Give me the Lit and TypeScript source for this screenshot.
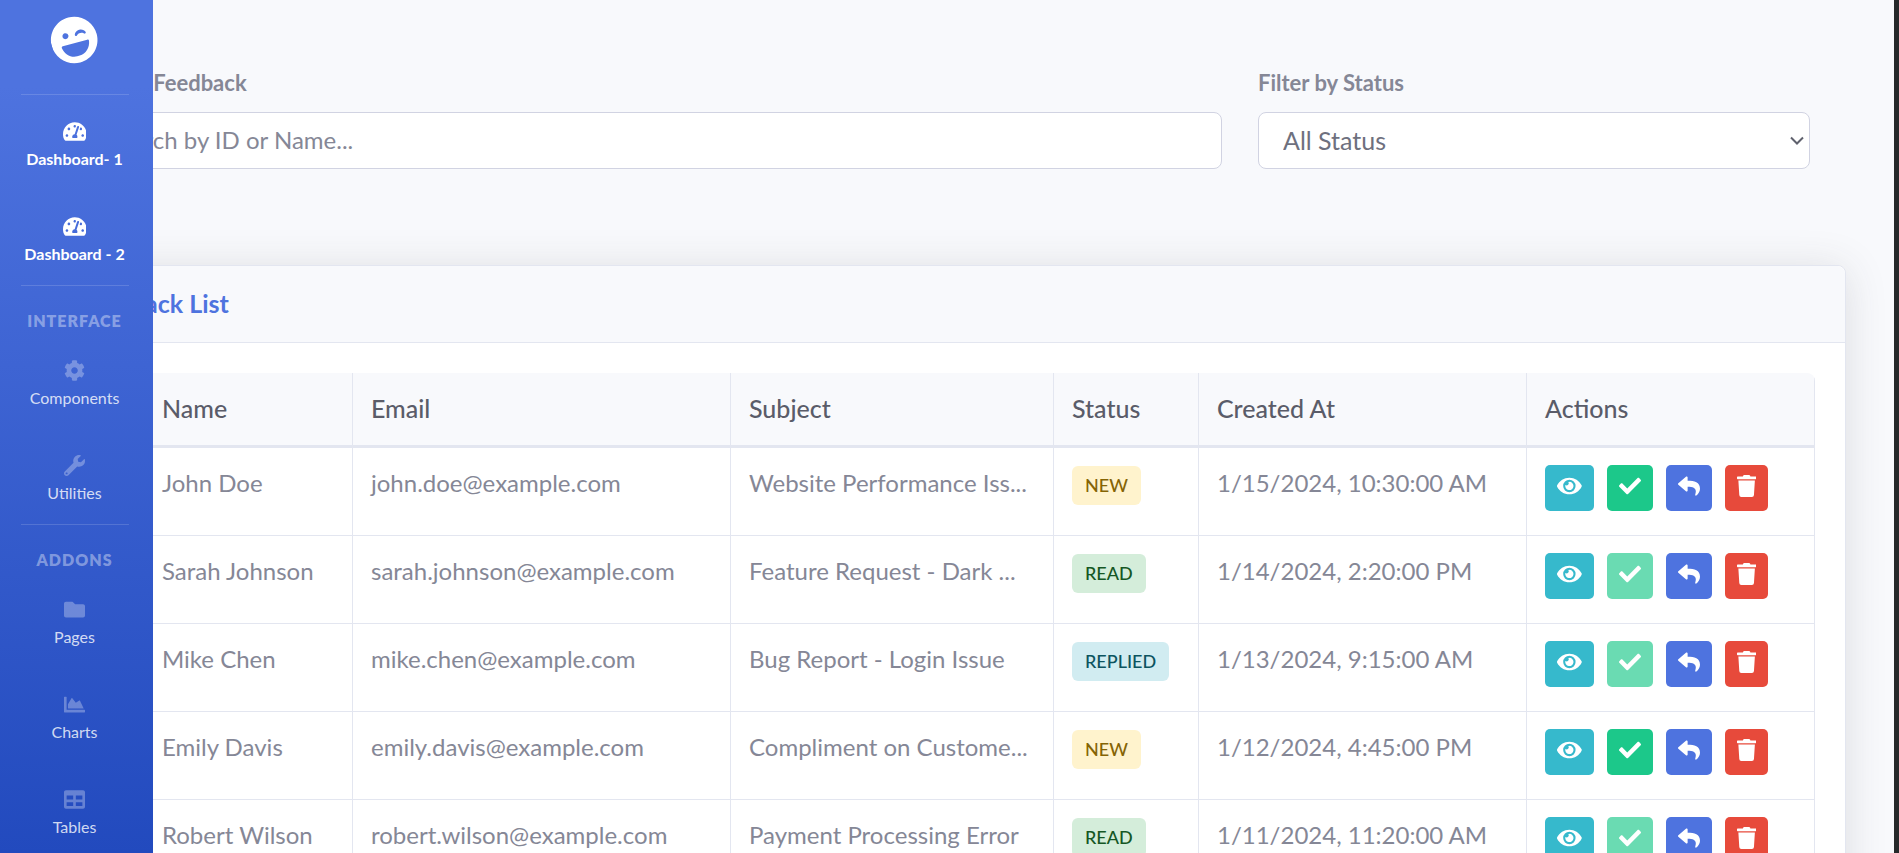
import { LitElement, html, css, svg } from "lit";
import { customElement, property, state } from "lit/decorators.js";
import { classMap } from "lit/directives/class-map.js";

interface Glyph {
  width: number;
  path: string;
}

const GLYPHS: Record<string, Glyph> = {
  wink: {
    width: 496,
    path: "M248 8C111 8 0 119 0 256s111 248 248 248 248-111 248-248S385 8 248 8zm20.1 198.1c4-25.2 34.2-42.1 59.9-42.1s55.9 16.9 59.9 42.1c1.7 11.1-11.4 18.3-19.8 10.8l-9.5-8.5c-14.8-13.2-46.2-13.2-61 0L288 217c-8.4 7.4-21.6.3-19.9-10.9zM168 160c17.7 0 32 14.3 32 32s-14.3 32-32 32-32-14.3-32-32 14.3-32 32-32zM113.6 288h268.8c9.6 0 17 8.2 15.5 17.7C387 378 330 432 262 432h-28c-68 0-125-54-135.9-126.3C96.6 296.2 104 288 113.6 288z",
  },
  gauge: {
    width: 576,
    path: "M288 32C128.94 32 0 160.94 0 320c0 52.8 14.25 102.26 39.06 144.8 5.61 9.62 16.3 15.2 27.44 15.2h443c11.14 0 21.83-5.58 27.44-15.2C561.75 422.26 576 372.8 576 320c0-159.06-128.94-288-288-288zm0 64c14.71 0 26.58 10.13 30.32 23.65-1.11 2.26-2.64 4.23-3.45 6.67l-9.22 27.67c-5.13 3.49-10.97 6.01-17.64 6.01-17.67 0-32-14.33-32-32S270.33 96 288 96zM96 384c-17.67 0-32-14.33-32-32s14.33-32 32-32 32 14.33 32 32-14.33 32-32 32zm48-160c-17.67 0-32-14.33-32-32s14.33-32 32-32 32 14.33 32 32-14.33 32-32 32zm246.77-72.41l-61.33 184C343.13 347.33 352 364.54 352 384c0 11.72-3.38 22.55-8.88 32H232.88c-5.5-9.45-8.88-20.28-8.88-32 0-33.94 26.5-61.43 59.9-63.59l61.34-184.01c4.17-12.56 17.73-19.45 30.36-15.17 12.57 4.19 19.35 17.79 15.17 30.36zm14.66 57.2l15.52-46.55c3.47-1.29 7.13-2.23 11.05-2.23 17.67 0 32 14.33 32 32s-14.33 32-32 32c-11.38-.01-20.89-6.28-26.57-15.22zM480 384c-17.67 0-32-14.33-32-32s14.33-32 32-32 32 14.33 32 32-14.33 32-32 32z",
  },
  cog: {
    width: 512,
    path: "M487.4 315.7l-42.6-24.6c4.3-23.2 4.3-47 0-70.2l42.6-24.6c4.9-2.8 7.1-8.6 5.5-14-11.1-35.6-30-67.8-54.7-94.6-3.8-4.1-10-5.1-14.8-2.3L380.8 110c-17.9-15.4-38.5-27.3-60.8-35.1V25.8c0-5.6-3.9-10.5-9.4-11.7-36.7-8.2-74.3-7.8-109.2 0-5.5 1.2-9.4 6.1-9.4 11.7V75c-22.2 7.9-42.8 19.8-60.8 35.1L88.7 85.5c-4.9-2.8-11-1.9-14.8 2.3-24.7 26.7-43.6 58.9-54.7 94.6-1.7 5.4.6 11.2 5.5 14L67.3 221c-4.3 23.2-4.3 47 0 70.2l-42.6 24.6c-4.9 2.8-7.1 8.6-5.5 14 11.1 35.6 30 67.8 54.7 94.6 3.8 4.1 10 5.1 14.8 2.3l42.6-24.6c17.9 15.4 38.5 27.3 60.8 35.1v49.2c0 5.6 3.9 10.5 9.4 11.7 36.7 8.2 74.3 7.8 109.2 0 5.5-1.2 9.4-6.1 9.4-11.7v-49.2c22.2-7.9 42.8-19.8 60.8-35.1l42.6 24.6c4.9 2.8 11 1.9 14.8-2.3 24.7-26.7 43.6-58.9 54.7-94.6 1.5-5.5-.7-11.3-5.6-14.1zM256 336c-44.1 0-80-35.9-80-80s35.9-80 80-80 80 35.9 80 80-35.9 80-80 80z",
  },
  wrench: {
    width: 512,
    path: "M507.73 109.1c-2.24-9.03-13.54-12.09-20.12-5.51l-74.36 74.36-67.88-11.31-11.31-67.88 74.36-74.36c6.62-6.62 3.43-17.9-5.66-20.16-47.38-11.74-99.55.91-136.58 37.93-39.64 39.64-50.55 97.1-34.05 147.2L18.74 402.76c-24.99 24.99-24.99 65.51 0 90.5 24.99 24.99 65.51 24.99 90.5 0l213.21-213.21c50.12 16.71 107.47 5.68 147.37-34.22 37.07-37.07 49.7-89.32 37.91-136.73zM64 472c-13.25 0-24-10.75-24-24 0-13.26 10.75-24 24-24s24 10.74 24 24c0 13.25-10.75 24-24 24z",
  },
  folder: {
    width: 512,
    path: "M464 128H272l-64-64H48C21.49 64 0 85.49 0 112v288c0 26.51 21.49 48 48 48h416c26.51 0 48-21.49 48-48V176c0-26.51-21.49-48-48-48z",
  },
  chart: {
    width: 512,
    path: "M500 384c6.6 0 12 5.4 12 12v40c0 6.6-5.4 12-12 12H12c-6.6 0-12-5.4-12-12V76c0-6.6 5.4-12 12-12h40c6.6 0 12 5.4 12 12v308h436zM372.7 159.5L288 216l-85.3-113.7c-5.1-6.8-15.5-6.3-19.9 1L96 248v104h384l-89.9-187.8c-3.2-6.5-11.4-8.7-17.4-4.7z",
  },
  table: {
    width: 512,
    path: "M464 32H48C21.49 32 0 53.49 0 80v352c0 26.51 21.49 48 48 48h416c26.51 0 48-21.49 48-48V80c0-26.51-21.49-48-48-48zM224 416H64v-96h160v96zm0-160H64v-96h160v96zm224 160H288v-96h160v96zm0-160H288v-96h160v96z",
  },
  eye: {
    width: 576,
    path: "M572.52 241.4C518.29 135.59 410.93 64 288 64S57.68 135.64 3.48 241.41a32.35 32.35 0 0 0 0 29.19C57.71 376.41 165.07 448 288 448s230.32-71.64 284.52-177.41a32.35 32.35 0 0 0 0-29.19zM288 400a144 144 0 1 1 144-144 143.93 143.93 0 0 1-144 144zm0-240a95.31 95.31 0 0 0-25.31 3.79 47.85 47.85 0 0 1-66.9 66.9A95.78 95.78 0 1 0 288 160z",
  },
  check: {
    width: 512,
    path: "M173.898 439.404l-166.4-166.4c-9.997-9.997-9.997-26.206 0-36.204l36.203-36.204c9.997-9.998 26.207-9.998 36.204 0L192 312.69 432.095 72.596c9.997-9.997 26.207-9.997 36.204 0l36.203 36.204c9.997 9.997 9.997 26.206 0 36.204l-294.4 294.401c-9.998 9.997-26.207 9.997-36.204-.001z",
  },
  reply: {
    width: 512,
    path: "M8.309 189.836L184.313 37.851C199.719 24.546 224 35.347 224 56.015v80.053c160.629 1.839 288 34.032 288 186.258 0 61.441-39.581 122.309-83.333 154.132-13.653 9.931-33.111-2.533-28.077-18.631 45.344-145.012-21.507-183.51-176.59-185.742V360c0 20.7-24.3 31.453-39.687 18.164l-176.004-152c-11.071-9.562-11.086-26.753 0-36.328z",
  },
  trash: {
    width: 448,
    path: "M432 32H312l-9.4-18.7A24 24 0 0 0 281.1 0H166.8a23.72 23.72 0 0 0-21.4 13.3L136 32H16A16 16 0 0 0 0 48v32a16 16 0 0 0 16 16h416a16 16 0 0 0 16-16V48a16 16 0 0 0-16-16zM53.2 467a48 48 0 0 0 47.9 45h245.8a48 48 0 0 0 47.9-45L416 128H32z",
  },
};

@customElement("fb-icon")
class FbIcon extends LitElement {
  static styles = css`
    :host {
      display: inline-flex;
    }
    .glyph {
      display: block;
      height: 1em;
      width: auto;
      fill: currentColor;
    }
  `;

  @property() name = "";

  render() {
    const glyph = GLYPHS[this.name];
    if (!glyph) return null;
    return html`<svg class="glyph" viewBox="0 0 ${glyph.width} 512" aria-hidden="true">
      ${svg`<path fill-rule="evenodd" d=${glyph.path}></path>`}
    </svg>`;
  }
}

interface NavItem {
  icon: string;
  label: string;
  active?: boolean;
}

interface NavGroup {
  heading?: string;
  items: NavItem[];
}

const NAV: NavGroup[] = [
  {
    items: [
      { icon: "gauge", label: "Dashboard- 1", active: true },
      { icon: "gauge", label: "Dashboard - 2", active: true },
    ],
  },
  {
    heading: "Interface",
    items: [
      { icon: "cog", label: "Components" },
      { icon: "wrench", label: "Utilities" },
    ],
  },
  {
    heading: "Addons",
    items: [
      { icon: "folder", label: "Pages" },
      { icon: "chart", label: "Charts" },
      { icon: "table", label: "Tables" },
    ],
  },
];

@customElement("fb-sidebar")
class FbSidebar extends LitElement {
  static styles = css`
    :host {
      display: block;
      box-sizing: border-box;
      overflow: hidden;
      background: linear-gradient(180deg, #4e73df 10%, #224abe 100%);
      padding-right: 4px;
    }
    .brand {
      display: flex;
      justify-content: center;
      align-items: center;
      box-sizing: border-box;
      height: 94px;
      padding: 0 1px 14px 0;
      color: #fff;
      font-size: 48px;
    }
    .brand fb-icon {
      transform: rotate(-15deg);
    }
    .rule {
      margin: 0 20px 0 21px;
      border: 0;
      border-top: 1px solid rgba(255, 255, 255, 0.15);
    }
    .heading {
      padding: 25px 0 3px;
      text-align: center;
      text-transform: uppercase;
      font-size: 16px;
      line-height: 20px;
      font-weight: 800;
      letter-spacing: 1px;
      color: rgba(255, 255, 255, 0.4);
    }
    .link {
      display: flex;
      flex-direction: column;
      align-items: center;
      gap: 3px;
      padding: 23px 0 19px;
      text-decoration: none;
      white-space: nowrap;
      font-size: 16px;
      line-height: 24px;
      color: rgba(255, 255, 255, 0.8);
    }
    .link fb-icon {
      align-items: center;
      height: 26px;
      font-size: 21px;
      color: rgba(255, 255, 255, 0.3);
    }
    .link.active {
      font-weight: 700;
      color: #fff;
    }
    .link.active fb-icon {
      color: #fff;
    }
  `;

  render() {
    return html`
      <a class="brand" href="#" aria-label="Home"><fb-icon name="wink"></fb-icon></a>
      <nav>
        ${NAV.map(
          (group) => html`
            <hr class="rule" />
            ${group.heading ? html`<div class="heading">${group.heading}</div>` : null}
            ${group.items.map(
              (item) => html`<a class=${classMap({ link: true, active: !!item.active })} href="#">
                <fb-icon name=${item.icon}></fb-icon>
                <span>${item.label}</span>
              </a>`
            )}
          `
        )}
      </nav>
    `;
  }
}

type Status = "new" | "read" | "replied";

interface Feedback {
  id: number;
  name: string;
  email: string;
  subject: string;
  status: Status;
  created: string;
}

const FEEDBACK: Feedback[] = [
  { id: 1, name: "John Doe", email: "john.doe@example.com", subject: "Website Performance Iss...", status: "new", created: "1/15/2024, 10:30:00 AM" },
  { id: 2, name: "Sarah Johnson", email: "sarah.johnson@example.com", subject: "Feature Request - Dark ...", status: "read", created: "1/14/2024, 2:20:00 PM" },
  { id: 3, name: "Mike Chen", email: "mike.chen@example.com", subject: "Bug Report - Login Issue", status: "replied", created: "1/13/2024, 9:15:00 AM" },
  { id: 4, name: "Emily Davis", email: "emily.davis@example.com", subject: "Compliment on Custome...", status: "new", created: "1/12/2024, 4:45:00 PM" },
  { id: 5, name: "Robert Wilson", email: "robert.wilson@example.com", subject: "Payment Processing Error", status: "read", created: "1/11/2024, 11:20:00 AM" },
];

@customElement("app-root")
class AppRoot extends LitElement {
  static styles = css`
    :host {
      display: flex;
      position: relative;
      height: 100vh;
      overflow: hidden;
      background: #f8f9fc;
      color: #858796;
      font-family: Lato, "Open Sans", sans-serif;
      font-size: 24px;
      line-height: 36px;
    }
    /* The sidebar lies over the left edge of the content. */
    .sidebar {
      position: absolute;
      inset: 0 auto 0 0;
      width: 153px;
      z-index: 2;
    }
    .main {
      flex: 1;
      min-width: 0;
      padding: 65px 48px 0 46px;
    }
    .edge {
      flex: none;
      width: 5px;
      background: #26292a;
    }
    .filters {
      display: grid;
      grid-template-columns: minmax(0, 1140fr) minmax(0, 552fr);
      gap: 36px;
      padding: 0 36px;
      margin-bottom: 96px;
    }
    .field {
      display: flex;
      flex-direction: column;
      gap: 11px;
    }
    .label {
      font-size: 22px;
      font-weight: 700;
    }
    .control {
      box-sizing: border-box;
      width: 100%;
      height: 57px;
      padding: 0 24px 2px;
      border: 1px solid #d1d3e2;
      border-radius: 8px;
      background: #fff;
      font: inherit;
      color: #6e707e;
      appearance: none;
    }
    .control::placeholder {
      color: #858796;
      opacity: 1;
    }
    .select-wrap {
      position: relative;
    }
    .select-wrap .control {
      display: block;
      font-size: 25px;
    }
    .chevron {
      position: absolute;
      right: 6px;
      top: 24px;
      width: 14px;
      height: 10px;
      fill: none;
      stroke: #5f616d;
      stroke-width: 2;
      pointer-events: none;
    }
    .card {
      border: 1px solid #e3e6f0;
      border-radius: 8px;
      background: #fff;
      box-shadow: 0 4px 42px rgba(58, 59, 69, 0.15);
    }
    .card-header {
      padding: 19px 30px 21px;
      border-bottom: 1px solid #e3e6f0;
      border-radius: 8px 8px 0 0;
      background: #f8f9fc;
    }
    .card-title {
      margin: 0;
      font-size: 25px;
      font-weight: 700;
      color: #4e73df;
    }
    .card-body {
      padding: 30px;
    }
    .table-wrap {
      overflow: hidden;
      border-radius: 8px;
    }
    .table {
      width: 100%;
      table-layout: fixed;
      border-collapse: separate;
      border-spacing: 0;
    }
    .col-id {
      width: 67px;
    }
    .col-name {
      width: 209px;
    }
    .col-email {
      width: 378px;
    }
    .col-status {
      width: 145px;
    }
    .col-created {
      width: 328px;
    }
    .col-actions {
      width: 288px;
    }
    th,
    td {
      box-sizing: border-box;
      padding: 17px 18px 19px;
      border-right: 1px solid #e3e6f0;
      text-align: left;
      vertical-align: top;
      white-space: nowrap;
    }
    /* Fully covered by the sidebar, so its text is not painted. */
    .id {
      visibility: hidden;
    }
    th {
      border-bottom: 3px solid #e3e6f0;
      background: #f8f9fc;
      font-size: 25px;
      font-weight: 500;
      color: #5a5c69;
    }
    td {
      height: 88px;
      border-bottom: 1px solid #e3e6f0;
    }
    .badge {
      display: block;
      width: fit-content;
      margin-top: 1px;
      padding: 0 13px;
      border-radius: 6px;
      font-size: 18px;
      line-height: 39px;
      font-weight: 500;
      text-transform: uppercase;
    }
    .badge.new {
      background: #fff3cd;
      color: #856404;
    }
    .badge.read {
      background: #d4edda;
      color: #155724;
    }
    .badge.replied {
      background: #d1ecf1;
      color: #0c5460;
    }
    .actions {
      display: flex;
      gap: 13px;
    }
    .btn {
      display: flex;
      align-items: center;
      height: 46px;
      padding: 0 12px 4px;
      border: 0;
      border-radius: 5px;
      font-size: 22px;
      color: #fff;
      cursor: pointer;
    }
    .btn:disabled {
      opacity: 0.65;
    }
    .view {
      background: #36b9cc;
    }
    .done {
      background: #1cc88a;
    }
    .answer {
      background: #4e73df;
    }
    .remove {
      background: #e74a3b;
    }
  `;

  @state() private query = "";
  @state() private status = "";

  private get rows() {
    const q = this.query.toLowerCase();
    return FEEDBACK.filter(
      (f) =>
        (!this.status || f.status === this.status) &&
        (!q || String(f.id) === q || f.name.toLowerCase().includes(q))
    );
  }

  private row(f: Feedback) {
    return html`<tr>
      <td class="id">${f.id}</td>
      <td>${f.name}</td>
      <td>${f.email}</td>
      <td>${f.subject}</td>
      <td><span class="badge ${f.status}">${f.status}</span></td>
      <td>${f.created}</td>
      <td>
        <div class="actions">
          <button class="btn view" aria-label="View"><fb-icon name="eye"></fb-icon></button>
          <button class="btn done" aria-label="Mark as read" ?disabled=${f.status !== "new"}>
            <fb-icon name="check"></fb-icon>
          </button>
          <button class="btn answer" aria-label="Reply"><fb-icon name="reply"></fb-icon></button>
          <button class="btn remove" aria-label="Delete"><fb-icon name="trash"></fb-icon></button>
        </div>
      </td>
    </tr>`;
  }

  render() {
    return html`
      <fb-sidebar class="sidebar"></fb-sidebar>
      <main class="main">
        <div class="filters">
          <div class="field">
            <label class="label" for="search">Search Feedback</label>
            <input
              class="control"
              id="search"
              type="text"
              placeholder="Search by ID or Name..."
              @input=${(e: Event) => (this.query = (e.target as HTMLInputElement).value)}
            />
          </div>
          <div class="field">
            <label class="label" for="status">Filter by Status</label>
            <div class="select-wrap">
              <select
                class="control"
                id="status"
                @change=${(e: Event) => (this.status = (e.target as HTMLSelectElement).value)}
              >
                <option value="">All Status</option>
                <option value="new">New</option>
                <option value="read">Read</option>
                <option value="replied">Replied</option>
              </select>
              <svg class="chevron" viewBox="0 0 14 10" aria-hidden="true">
                <path d="M1 1.5l6 6 6-6"></path>
              </svg>
            </div>
          </div>
        </div>
        <section class="card">
          <div class="card-header"><h6 class="card-title">Feedback List</h6></div>
          <div class="card-body">
            <div class="table-wrap">
              <table class="table">
                <colgroup>
                  <col class="col-id" />
                  <col class="col-name" />
                  <col class="col-email" />
                  <col class="col-subject" />
                  <col class="col-status" />
                  <col class="col-created" />
                  <col class="col-actions" />
                </colgroup>
                <thead>
                  <tr>
                    <th class="id">ID</th>
                    <th>Name</th>
                    <th>Email</th>
                    <th>Subject</th>
                    <th>Status</th>
                    <th>Created At</th>
                    <th>Actions</th>
                  </tr>
                </thead>
                <tbody>
                  ${this.rows.map((f) => this.row(f))}
                </tbody>
              </table>
            </div>
          </div>
        </section>
      </main>
      <div class="edge"></div>
    `;
  }
}
